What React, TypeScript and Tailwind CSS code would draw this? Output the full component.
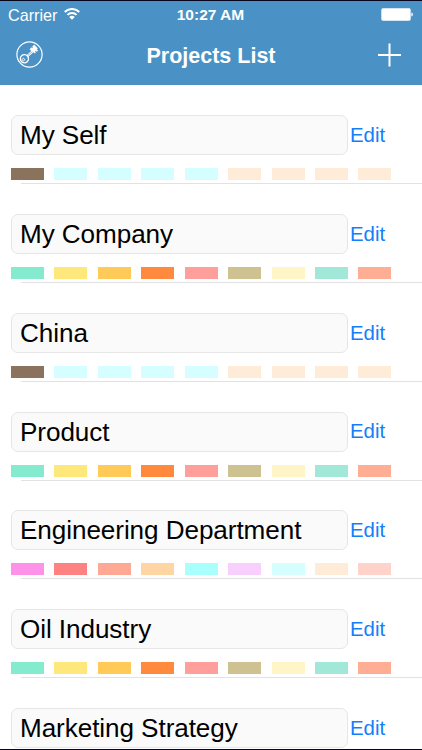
type Project = {
  id: string;
  name: string;
  swatches: string[];
};

const personal = [
  "bg-[#8b725c]",
  "bg-[#d4feff]",
  "bg-[#d4feff]",
  "bg-[#d4feff]",
  "bg-[#d4feff]",
  "bg-[#ffecd8]",
  "bg-[#ffecd8]",
  "bg-[#ffecd8]",
  "bg-[#ffecd8]",
];

const business = [
  "bg-[#84ebcf]",
  "bg-[#fee77b]",
  "bg-[#ffca57]",
  "bg-[#ff8a3d]",
  "bg-[#ff9f9b]",
  "bg-[#cec290]",
  "bg-[#fff5c6]",
  "bg-[#a2e8d8]",
  "bg-[#ffad93]",
];

const engineering = [
  "bg-[#fd92e8]",
  "bg-[#ff8283]",
  "bg-[#ffa893]",
  "bg-[#ffd6a3]",
  "bg-[#a9fffb]",
  "bg-[#f8cffd]",
  "bg-[#d5fffe]",
  "bg-[#ffecd8]",
  "bg-[#ffd3c9]",
];

const projects: Project[] = [
  { id: "my-self", name: "My Self", swatches: personal },
  { id: "my-company", name: "My Company", swatches: business },
  { id: "china", name: "China", swatches: personal },
  { id: "product", name: "Product", swatches: business },
  { id: "engineering", name: "Engineering Department", swatches: engineering },
  { id: "oil", name: "Oil Industry", swatches: business },
  { id: "marketing", name: "Marketing Strategy", swatches: business },
];

function WifiIcon() {
  return (
    <svg className="h-3 w-4" viewBox="0 0 16 12" fill="none" stroke="white" strokeWidth="2">
      <path d="M.7 4a10.3 10.3 0 0 1 14.6 0" />
      <path d="M3.4 6.9a6.5 6.5 0 0 1 9.2 0" />
      <path d="M8 11.8 5.2 9a4 4 0 0 1 5.6 0Z" fill="white" stroke="none" />
    </svg>
  );
}

function BatteryIcon() {
  return (
    <svg className="h-[13px] w-8" viewBox="0 0 32 13">
      <rect x=".3" y=".3" width="29.4" height="12.4" rx="1.6" fill="white" />
      <path d="M30.4 4.6c2 .3 2 3.5 0 3.8Z" fill="white" />
    </svg>
  );
}

function KeyIcon() {
  return (
    <svg className="h-[27px] w-[27px]" viewBox="0 0 27 27" fill="none" stroke="white">
      <circle cx="13.5" cy="13.5" r="12.6" strokeWidth="1.2" />
      <g transform="translate(8.4 17.7) rotate(-42)">
        <ellipse rx="4.1" ry="4.1" strokeWidth="1.3" />
        <circle cx="-1.3" r="1.2" strokeWidth=".9" />
        <path d="M4-.7h12.6M4 .7h12.6" strokeWidth="1" />
        <path d="M10.4-.6v-2.9h2.3v1h1.2v-1.2h2.7V1h-1.2v2h-1.5V1.6h-1.2v1.2h-1.5V.6Z" fill="white" strokeWidth=".3" />
      </g>
    </svg>
  );
}

function ProjectRow({ project }: { project: Project }) {
  return (
    <li className="flex h-[98.87px] shrink-0 flex-col pl-[11px] pt-[30px]">
      <div className="flex h-10 shrink-0 items-center">
        <div className="flex h-10 w-[337px] items-center rounded-[7px] border border-[#e6e6e6] bg-[#fafafa] pl-2 text-[26.1px] leading-none tracking-[-0.07px] text-black">
          <span className="whitespace-nowrap">{project.name}</span>
        </div>
        <button className="ml-[2px] text-[20.4px] leading-none text-[#147efb]">Edit</button>
      </div>
      <div className="mt-[13px] flex h-3 shrink-0 gap-[10.43px]">
        {project.swatches.map((color, index) => (
          <span key={index} className={`h-3 w-[33px] ${color}`} />
        ))}
      </div>
      <div className="ml-[10px] mt-[3px] h-px shrink-0 bg-[#e2e2e4]" />
    </li>
  );
}

export default function App() {
  return (
    <div className="flex h-[750px] w-[422px] flex-col overflow-hidden border-y border-[#08061f] bg-white font-['Liberation_Sans',Arial,sans-serif]">
      <header className="h-[84px] shrink-0 bg-[#4a92c5] text-white">
        <div className="grid h-[27px] grid-cols-3 items-center pl-2 pr-[9px]">
          <div className="flex items-center gap-[7px]">
            <span className="pt-px text-[16.2px] leading-none">Carrier</span>
            <WifiIcon />
          </div>
          <span className="text-center text-[15.5px] font-bold leading-none">10:27 AM</span>
          <div className="flex justify-end">
            <BatteryIcon />
          </div>
        </div>
        <div className="grid h-[53px] grid-cols-[1fr_auto_1fr] items-center pl-4 pr-[21px]">
          <KeyIcon />
          <h1 className="whitespace-nowrap pl-[5px] pt-[5px] text-[21.5px] font-bold leading-none">Projects List</h1>
          <svg className="h-6 w-6 justify-self-end" viewBox="0 0 24 24" stroke="white" strokeWidth="2">
            <path d="M12.5 .5v23M1 12h23" />
          </svg>
        </div>
      </header>
      <ul className="flex min-h-0 flex-1 flex-col overflow-hidden">
        {projects.map((project) => (
          <ProjectRow key={project.id} project={project} />
        ))}
      </ul>
    </div>
  );
}
